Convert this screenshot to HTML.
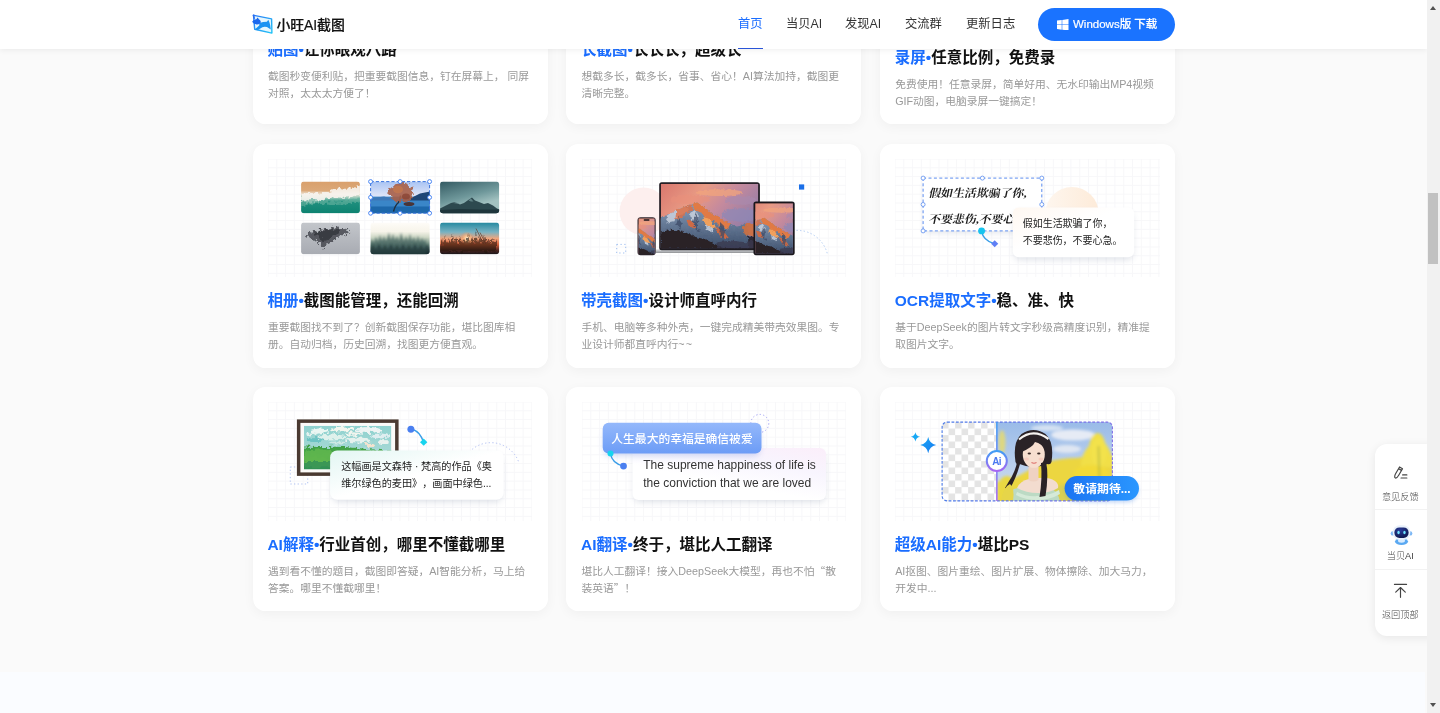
<!DOCTYPE html>
<html lang="zh-CN">
<head>
<meta charset="utf-8">
<title>小旺AI截图</title>
<style>
*{box-sizing:border-box;margin:0;padding:0}
html,body{width:1440px;height:713px;overflow:hidden}
body{text-spacing-trim:space-all;font-family:"Liberation Sans","Noto Sans CJK SC",sans-serif;background:#fafafa;color:#1a1a1a;position:relative}
.page{will-change:transform;position:absolute;left:0;top:0;width:1427px;height:713px;overflow:hidden;background:#fafafa}
.next{position:absolute;left:0;top:672px;width:1425px;height:41px;background:#fafcff}
/* header */
.hdr{position:absolute;left:0;top:0;width:1427px;height:49px;background:#fff;box-shadow:0 1px 6px rgba(0,0,0,.07);z-index:10}
.logo{position:absolute;left:252px;top:14px;width:21px;height:20px}
.brand{position:absolute;left:276.5px;top:13.5px;height:23px;line-height:23px;font-size:13.9px;font-weight:500;color:#111;white-space:nowrap;letter-spacing:-.08px;-webkit-text-stroke:.2px #111}
.nav{position:absolute;top:0;height:49px;line-height:49px;font-size:12.3px;color:#333;white-space:nowrap}
.nav.on{color:#1a6dff}
.nav.on:after{content:"";position:absolute;left:0;right:0;top:47.700px;height:1.500px;background:#2a55d8}
.dl{position:absolute;left:1038px;top:8px;width:137px;height:33px;border-radius:17px;background:#1a73ff;color:#fff;font-size:11.5px;font-weight:500;line-height:33px;white-space:nowrap}
.dl svg{position:absolute;left:19px;top:10.800px;width:11.500px;height:11.500px}
.dl span{position:absolute;left:35px;top:0;-webkit-text-stroke:.2px #fff}
/* cards */
.card{position:absolute;width:295.2px;background:#fff;border-radius:12.3px;box-shadow:0 3px 12px rgba(0,0,0,.045);padding:15px 15.4px 0}
.ill{position:relative;width:264.4px;height:118.7px;overflow:hidden;
 background-color:#fff;
 background-image:linear-gradient(#f7f7f9 1px,transparent 1px),linear-gradient(90deg,#f7f7f9 1px,transparent 1px);
 background-size:8.8px 8.8px;background-position:-.5px -.5px}
.ill svg{position:absolute;left:0;top:0;width:264.4px;height:118.7px;overflow:visible}
.t{margin-top:13.2px;margin-left:-.5px;height:21.5px;line-height:21.5px;font-size:15.5px;font-weight:700;color:#111;white-space:nowrap}
.t b{color:#1a6dff;font-weight:700}
.d{margin-top:7.5px;font-size:10.76px;line-height:16.9px;color:#999;font-weight:400}
.q{font-family:"Noto Sans CJK SC",sans-serif}
.tx{position:absolute;white-space:nowrap}
/* side */
.side{position:absolute;left:1374.5px;top:444px;width:61px;height:191.5px;background:#fff;border-radius:12px 0 0 12px;box-shadow:0 2px 10px rgba(0,0,0,.08);z-index:5}
.side .lb{position:absolute;left:1px;width:49.5px;text-align:center;font-size:9.2px;color:#444;font-weight:300;line-height:12px;margin-top:1px}
.side i{position:absolute;left:0;width:53.5px;height:1px;background:#f2f2f2}
/* scrollbar */
.sb{position:absolute;left:1427px;top:0;width:13px;height:713px;background:#f1f1f1;z-index:20}
.sb .th{position:absolute;left:1.3px;top:192.700px;width:10px;height:71.300px;background:#c1c1c1}
.sb .up,.sb .dn{position:absolute;left:3px;width:0;height:0;border-left:3.5px solid transparent;border-right:3.5px solid transparent}
.sb .up{top:6px;border-bottom:4px solid #505050}
.sb .dn{bottom:6px;border-top:4px solid #505050}
</style>
</head>
<body>
<div class="page">
<div class="next"></div>

<!-- ROW 1 -->
<div class="card" style="left:252.5px;top:-108.1px;height:232.3px">
 <div class="ill"></div>
 <div class="t"><b>贴图•</b>让你眼观八路</div>
 <div class="d">截图秒变便利贴，把重要截图信息，钉在屏幕上， 同屏对照，太太太方便了！</div>
</div>
<div class="card" style="left:566.15px;top:-108.1px;height:232.3px">
 <div class="ill"></div>
 <div class="t"><b>长截图•</b>长长长，超级长</div>
 <div class="d">想截多长，截多长，省事、省心！AI算法加持，截图更清晰完整。</div>
</div>
<div class="card" style="left:879.8px;top:-108.1px;height:232.3px">
 <div class="ill" style="height:126.7px"></div>
 <div class="t"><b>录屏•</b>任意比例，免费录</div>
 <div class="d">免费使用！任意录屏，简单好用、无水印输出MP4视频GIF动图，电脑录屏一键搞定！</div>
</div>

<!-- ROW 2 -->
<div class="card" style="left:252.5px;top:143.6px;height:224.5px">
 <div class="ill" id="i21"><svg viewBox="0 0.5 264.4 118.7">
<defs>
 <clipPath id="p1"><rect x="33.1" y="23.1" width="58.8" height="31.6" rx="3"/></clipPath>
 <clipPath id="p2"><rect x="102.6" y="23.1" width="59" height="31.6" rx="1"/></clipPath>
 <clipPath id="p3"><rect x="172.1" y="23.1" width="59" height="31.6" rx="3"/></clipPath>
 <clipPath id="p4"><rect x="33.1" y="64.1" width="58.8" height="31.6" rx="3"/></clipPath>
 <clipPath id="p5"><rect x="102.6" y="64.1" width="59" height="31.6" rx="3"/></clipPath>
 <clipPath id="p6"><rect x="172.1" y="64.1" width="59" height="31.6" rx="3"/></clipPath>
 <linearGradient id="g1" x1="0" y1="0" x2="0" y2="1"><stop offset="0" stop-color="#d9a06c"/><stop offset=".28" stop-color="#dba878"/><stop offset=".4" stop-color="#efe6d8"/><stop offset=".52" stop-color="#8fc4b4"/><stop offset=".64" stop-color="#1f8f7e"/><stop offset="1" stop-color="#0c8270"/></linearGradient>
 <linearGradient id="g2" x1="0" y1="0" x2="0" y2="1"><stop offset="0" stop-color="#a9c4f3"/><stop offset=".45" stop-color="#dfe4f8"/><stop offset=".5" stop-color="#3d83c4"/><stop offset="1" stop-color="#1f6fb3"/></linearGradient>
 <linearGradient id="g3" x1="0" y1="0" x2=".5" y2="1"><stop offset="0" stop-color="#335a62"/><stop offset=".55" stop-color="#6f989b"/><stop offset=".85" stop-color="#a3c2c1"/></linearGradient>
 <linearGradient id="g4" x1="0" y1="0" x2="0" y2="1"><stop offset="0" stop-color="#c3c6cb"/><stop offset="1" stop-color="#a8abb2"/></linearGradient>
 <linearGradient id="g5" x1="0" y1="0" x2="0" y2="1"><stop offset="0" stop-color="#fefcf8"/><stop offset=".28" stop-color="#f7f4ea"/><stop offset=".46" stop-color="#cfd8c6"/><stop offset=".7" stop-color="#6c8a7f"/><stop offset=".92" stop-color="#2c4446"/><stop offset="1" stop-color="#14242a"/></linearGradient>
 <linearGradient id="g6" x1="0" y1="0" x2="0" y2="1"><stop offset="0" stop-color="#2489a0"/><stop offset=".3" stop-color="#78b2c2"/><stop offset=".5" stop-color="#f0a67e"/><stop offset=".68" stop-color="#d9623a"/><stop offset=".85" stop-color="#5a2a22"/><stop offset="1" stop-color="#15151a"/></linearGradient>
 <radialGradient id="sun"><stop offset="0" stop-color="#fff6e0"/><stop offset=".4" stop-color="#ffc38a" stop-opacity=".8"/><stop offset="1" stop-color="#f08a55" stop-opacity="0"/></radialGradient>
 <filter id="b1" x="-20%" y="-20%" width="140%" height="140%"><feGaussianBlur stdDeviation="1.2"/></filter>
 <filter id="dz" x="-20%" y="-20%" width="140%" height="140%"><feTurbulence type="fractalNoise" baseFrequency=".3" numOctaves="2" seed="7" result="n"/><feDisplacementMap in="SourceGraphic" in2="n" scale="6" xChannelSelector="R" yChannelSelector="G"/><feGaussianBlur stdDeviation=".4"/></filter>
 <filter id="dz2" x="-20%" y="-20%" width="140%" height="140%"><feTurbulence type="fractalNoise" baseFrequency=".35" numOctaves="2" seed="3" result="n"/><feDisplacementMap in="SourceGraphic" in2="n" scale="8" xChannelSelector="R" yChannelSelector="G"/><feGaussianBlur stdDeviation=".6"/></filter>
 <filter id="b05" x="-20%" y="-20%" width="140%" height="140%"><feGaussianBlur stdDeviation=".5"/></filter>
</defs>
<!-- photo 1 beach -->
<g clip-path="url(#p1)">
 <rect x="33" y="23" width="59" height="32" fill="url(#g1)"/>
 <path d="M33 36 q8 -3 15 -1 t14 -2 t13 -3 t17 -3 v9 q-10 4 -20 3 t-20 3 t-19 1z" fill="#f7f4ee" opacity=".92" filter="url(#dz)"/>
 <path d="M33 42 q12 -3 24 0 t35 -3 v4 q-20 5 -34 3 t-25 2z" fill="#5fae9c" opacity=".7" filter="url(#dz)"/>
</g>
<!-- photo 2 tree -->
<g clip-path="url(#p2)">
 <rect x="102" y="23" width="60" height="32" fill="url(#g2)"/>
 <path d="M102 40 l14 -2 l12 3 h10 l14 -4 l10 -3 v12 h-60z" fill="#3f78b8"/>
 <path d="M140 41 l12 -6 l10 -2 v10 h-22z" fill="#1f4677"/>
 <rect x="102" y="42" width="60" height="13" fill="#3a86c8"/>
 <rect x="102" y="48" width="60" height="7" fill="#1d68ab"/>
 <path d="M125.500 53 q1.500 -6 5 -9 q1.500 -3 2 -7" stroke="#22303f" stroke-width="1.400" fill="none"/>
 <path d="M120.500 36 q-1 -6 5 -8 q2 -4 8 -4 q5 -.5 7 3 q5 2 4 8 q2 5 -3 7 q-4 3 -8 .5 q-4 2 -7 -1 q-5 -1 -6 -5.500z" fill="#a8614a" opacity=".9" filter="url(#dz)"/>
 <ellipse cx="130" cy="31" rx="5" ry="3.800" fill="#c27750" opacity=".9" filter="url(#b05)"/>
 <ellipse cx="138" cy="38" rx="4" ry="3" fill="#8a4536" opacity=".8" filter="url(#b05)"/>
 <ellipse cx="141" cy="45.500" rx="5.500" ry="2" fill="#4a3438" filter="url(#b05)"/>
</g>
<!-- photo 3 teal mountain -->
<g clip-path="url(#p3)">
 <rect x="172" y="23" width="60" height="32" fill="url(#g3)"/>
 <path d="M172 50 l6 -3 l5 -2.500 l4 -1 l5 2.500 l4 -1.500 l5 -3.500 l3 -2 l3 3 l4 1.500 l5 2 l4 -1 l5 2.500 l4 3 l4 1.500 v6 h-70z" fill="#2d494f"/>
 <path d="M172 51.500 l20 -1 l20 .5 l20 0 v5 h-60z" fill="#1f363c"/>
 <path d="M200.500 42 l2.500 -2 l2.500 3 l-2.500 0 z M185 44.500 l3 -1 l3 2z" fill="#7fa3a6" opacity=".6"/>
</g>
<!-- photo 4 ink grey -->
<g clip-path="url(#p4)">
 <rect x="33" y="64" width="59" height="32" fill="url(#g4)"/>
 <path d="M38 77 l7 -5 l5 1.500 l6 -4.500 l5 2 l7 -3.500 l6 2.500 l9 2 l-5 4 l-6 1 l-6 5 l-6 2 l-5 6.500 l-3.500 -6 l-6 -4 l-4.500 -1z" fill="#3f434a" opacity=".8" filter="url(#dz2)"/>
 <path d="M46 75 l9 -4 l7 1 l7 -2 l5 2 l-7 4 l-6 5 l-6 2 l-4 -5z" fill="#23272c" opacity=".55" filter="url(#dz2)"/>
</g>
<!-- photo 5 misty forest -->
<g clip-path="url(#p5)">
 <rect x="102" y="64" width="60" height="32" fill="url(#g5)"/>
 <path d="M102 86 l2 -5 l2 4 l2 -7 l2 6 l2 -8 l2 7 l2 -6 l2 6 l3 -9 l2 8 l2 -7 l2 7 l2 -5 l2 6 l2 -9 l3 9 l2 -6 l2 6 l2 -8 l2 8 l2 -5 l2 6 l2 -7 l2 7 l2 -5 l2 5 l2 -4 v16 h-60z" fill="#3f5f5b" opacity=".7" filter="url(#b1)"/>
 <path d="M102 91 l3 -5 l3 5 l3 -6 l3 6 l3 -5 l3 5 l3 -6 l3 6 l3 -5 l3 5 l3 -6 l3 6 l3 -5 l3 5 l3 -6 l3 6 l3 -5 l3 5 l3 -6 l3 6 v6 h-60z" fill="#182a2f" opacity=".55" filter="url(#b1)"/>
</g>
<!-- photo 6 sunset grass -->
<g clip-path="url(#p6)">
 <rect x="172" y="64" width="60" height="32" fill="url(#g6)"/>
 <circle cx="199" cy="80" r="7" fill="url(#sun)"/>
 <path d="M172 88 l2 -8 l1 7 l2 -10 l2 9 l2 -7 l1 7 l3 -11 l1 10 l2 -7 l2 8 l2 -9 l2 8 l2 -6 l2 6 l2 -10 l2 10 l2 -7 l2 7 l2 -12 l2 12 l2 -7 l2 7 l2 -8 l2 8 l2 -5 l2 5 l2 -6 l2 6 l2 -4 l1 4 v8 h-60z" fill="#24120f" opacity=".6" filter="url(#dz)"/>
 <path d="M208 70 l8 16 M212 74 l6 12" stroke="#5a2e1e" stroke-width=".6"/>
</g>
<!-- selection -->
<rect x="102.6" y="23.1" width="59" height="31.6" fill="none" stroke="#3a72dc" stroke-width="1" stroke-dasharray="3.2 2"/>
<g fill="#fff" stroke="#3b7cf0" stroke-width=".9">
 <circle cx="102.6" cy="23.1" r="2"/><circle cx="132.1" cy="23.1" r="2"/><circle cx="161.6" cy="23.1" r="2"/>
 <circle cx="102.6" cy="38.9" r="2"/><circle cx="161.6" cy="38.9" r="2"/>
 <circle cx="102.6" cy="54.7" r="2"/><circle cx="132.1" cy="54.7" r="2"/><circle cx="161.6" cy="54.7" r="2"/>
</g>
</svg></div>
 <div class="t"><b>相册•</b>截图能管理，还能回溯</div>
 <div class="d">重要截图找不到了？创新截图保存功能，堪比图库相册。自动归档，历史回溯，找图更方便直观。</div>
</div>
<div class="card" style="left:566.15px;top:143.6px;height:224.5px">
 <div class="ill" id="i22"><svg viewBox="0 0 264.4 118.7">
<defs>
 <linearGradient id="sk" x1="0" y1="0" x2="1" y2=".6"><stop offset="0" stop-color="#d9776e"/><stop offset=".35" stop-color="#e89a84"/><stop offset=".6" stop-color="#c58a9d"/><stop offset="1" stop-color="#8a7aa8"/></linearGradient>
 <linearGradient id="mt" x1="0" y1="0" x2="0" y2="1"><stop offset="0" stop-color="#8aa0bd"/><stop offset="1" stop-color="#3d4f6b"/></linearGradient>
 <symbol id="wall" viewBox="0 0 100 66" preserveAspectRatio="xMidYMid slice">
  <rect width="100" height="66" fill="url(#sk)"/>
  <g filter="url(#bl8)">
  <ellipse cx="60" cy="9" rx="24" ry="3.500" fill="#f2a47c" opacity=".75"/>
  <ellipse cx="30" cy="16" rx="20" ry="5" fill="#e98f7c" opacity=".6"/>
  <ellipse cx="82" cy="32" rx="20" ry="7" fill="#8f88b6" opacity=".75"/>
  <ellipse cx="82" cy="17" rx="16" ry="4.500" fill="#a98aae" opacity=".65"/>
  <rect x="-6" y="54" width="112" height="24" fill="#2e2a36"/>
  <path d="M0 35 l8 -4 l8 -4 l9 -4 l7 -2 l5.500 -2 l5 4 l5 3 l5 5 l6 2 l6 5 l7 3 l7 3 l6 -3 l5 2 v23 h-100z" fill="url(#mt)"/>
  <path d="M8 31 l8 -4 l9 -4 l4 3 l-5 5 l-6 2 l-4 5 l-8 2z M30 30 l5 -3 l4 6 l-2 7 l-6 -3z M46 40 l5 2 l3 8 l-7 -3z" fill="#c9d1de" opacity=".85"/>
  <path d="M32 21 l5.500 -2 l5 4 l5 3 l5 5 l6 2 l6 5 l7 3 l-3 5 l-9 -3 l-6 -6 l-7 0 l-4 -7 l-7 -3 l-3 -6z" fill="#e07a44"/>
  <path d="M16 27 l9 -4 l7 -2 l1 6 l-7 3 l-5 5 l-6 1z" fill="#dd7046" opacity=".85"/>
  <path d="M44 34 l7 3 l6 9 l-8 -2 l-7 -6z" fill="#f0a05c"/>
  <path d="M56 44 l8 4 l6 8 l-9 -2z M26 36 l6 2 l4 8 l-7 -2z" fill="#d9683c" opacity=".9"/>
  <path d="M36 30 l3 6 l-2 8 l4 6 l-5 -3 l-3 -8z M62 40 l4 8 l-2 8 l-4 -6z M18 34 l4 6 l-2 6 l-4 -4z" fill="#3c4966" opacity=".75"/>
  <path d="M84 44 l7 -4 l5 2 l4 1 v12 l-14 -3z" fill="#d0703f" opacity=".9"/>
  <path d="M0 50 l10 -3 l12 1 l12 6 l12 3 l12 6 l8 3 h-66z" fill="#2a2228"/>
  <path d="M58 60 l14 -2 l14 2 l14 -3 v9 h-42z" fill="#3a3a50" opacity=".8"/>
  </g>
 </symbol>
 <filter id="bl8" x="-5%" y="-5%" width="110%" height="110%"><feTurbulence type="fractalNoise" baseFrequency=".35" numOctaves="2" seed="11" result="n"/><feDisplacementMap in="SourceGraphic" in2="n" scale="4" xChannelSelector="R" yChannelSelector="G"/><feGaussianBlur stdDeviation=".35"/></filter>
</defs>
<circle cx="61.5" cy="52.4" r="24" fill="#fdefee"/>
<rect x="217" y="25.4" width="5.2" height="5.2" fill="#1a6fe8"/>
<path d="M214.5 71.4 a31 31 0 0 1 31 24" fill="none" stroke="#a9c6f0" stroke-width=".9" stroke-dasharray="1.4 2.2"/>
<rect x="34.7" y="85.4" width="9" height="8.6" fill="none" stroke="#9dbdf0" stroke-width="1" stroke-dasharray="1.2 2.6"/>
<!-- laptop -->
<rect x="73.5" y="90.6" width="108" height="3.4" rx="1.2" fill="#c9cbce"/>
<rect x="73.5" y="92.6" width="108" height="1.4" rx=".7" fill="#9a9c9f"/>
<rect x="77.2" y="23.2" width="100.7" height="68" rx="2.5" fill="#1d1a20"/>
<svg x="78.7" y="24.8" width="97.7" height="64.4"><use href="#wall" width="97.7" height="64.4"/></svg>
<!-- phone -->
<rect x="55.5" y="58.2" width="18.2" height="38" rx="3.2" fill="#2a2228"/>
<svg x="56.6" y="59.3" width="16" height="35.8"><use href="#wall" width="16" height="35.8"/></svg>
<rect x="61.6" y="60.2" width="6" height="1.6" rx=".8" fill="#1a1518"/>
<!-- tablet -->
<rect x="171.5" y="42.4" width="41.2" height="53.8" rx="2.6" fill="#1a171c"/>
<svg x="173.3" y="44.2" width="37.6" height="50.2"><use href="#wall" width="37.6" height="50.2"/></svg>
</svg></div>
 <div class="t"><b>带壳截图•</b>设计师直呼内行</div>
 <div class="d">手机、电脑等多种外壳，一键完成精美带壳效果图。专业设计师都直呼内行<span style="letter-spacing:1.200px">~~</span></div>
</div>
<div class="card" style="left:879.8px;top:143.6px;height:224.5px">
 <div class="ill" id="i23"><svg viewBox="0 0 264.4 118.7">
<defs>
 <filter id="sh3" x="-20%" y="-30%" width="140%" height="170%"><feGaussianBlur stdDeviation="3"/></filter>
 <linearGradient id="pk" x1="0" y1="0" x2="1" y2="0"><stop offset="0" stop-color="#fef6ee"/><stop offset="1" stop-color="#fdebd9"/></linearGradient>
 <linearGradient id="pp" x1="0" y1="0" x2="1" y2="1"><stop offset="0" stop-color="#fff8f1"/><stop offset=".45" stop-color="#ffffff"/></linearGradient>
</defs>
<circle cx="177" cy="54.600" r="26.700" fill="url(#pk)"/>
<rect x="30" y="24" width="115" height="50" fill="#5a6a8a" opacity=".16" filter="url(#sh3)"/>
<rect x="28.1" y="19.1" width="118.7" height="52.8" fill="#fff"/>
<g font-family="'Liberation Serif','Noto Serif CJK SC',serif" font-weight="700" fill="#1c1c1c" font-size="11.2" transform="skewX(-12)">
 <text x="41.5" y="37.8" textLength="98" lengthAdjust="spacingAndGlyphs">假如生活欺骗了你,</text>
 <text x="47" y="64.4" textLength="98" lengthAdjust="spacingAndGlyphs">不要悲伤,不要心急</text>
</g>
<rect x="28.1" y="19.1" width="118.7" height="52.8" fill="none" stroke="#5b8def" stroke-width="1" stroke-dasharray="3 2.4"/>
<g fill="#fff" stroke="#5b8def" stroke-width=".8">
 <circle cx="28.1" cy="19.1" r="2"/><circle cx="87.4" cy="19.1" r="2"/><circle cx="146.8" cy="19.1" r="2"/>
 <circle cx="28.1" cy="45.5" r="2"/><circle cx="146.8" cy="45.5" r="2"/>
 <circle cx="28.1" cy="71.9" r="2"/><circle cx="146.8" cy="71.9" r="2"/>
</g>
<path d="M86.6 71.9 c1 8 6 11 13 13" fill="none" stroke="#3a9ee8" stroke-width="1.3"/>
<circle cx="86.6" cy="71.9" r="3.4" fill="#17c4ee"/>
<rect x="97.2" y="82.3" width="5" height="5" fill="#5f7ff5" transform="rotate(45 99.7 84.8)"/>
<rect x="119" y="53" width="119" height="48" rx="6" fill="#5a6a8a" opacity=".18" filter="url(#sh3)"/>
<rect x="117.8" y="48.4" width="121.4" height="49.8" rx="6" fill="url(#pp)"/>
<g font-family="'Liberation Sans','Noto Sans CJK SC',sans-serif" font-size="10" fill="#222">
 <text x="127.7" y="68.2">假如生活欺骗了你，</text>
 <text x="127.7" y="84.9">不要悲伤，不要心急。</text>
</g>
</svg></div>
 <div class="t"><b>OCR提取文字•</b>稳、准、快</div>
 <div class="d">基于DeepSeek的图片转文字秒级高精度识别，精准提取图片文字。</div>
</div>

<!-- ROW 3 -->
<div class="card" style="left:252.5px;top:386.9px;height:224.5px">
 <div class="ill" id="i31"><svg viewBox="0 0 264.4 118.7">
<defs>
 <filter id="sh4" x="-20%" y="-30%" width="140%" height="170%"><feGaussianBlur stdDeviation="3"/></filter>
 <filter id="bp" x="-10%" y="-10%" width="120%" height="120%"><feTurbulence type="fractalNoise" baseFrequency=".22" numOctaves="2" seed="4" result="n"/><feDisplacementMap in="SourceGraphic" in2="n" scale="7" xChannelSelector="R" yChannelSelector="G"/><feGaussianBlur stdDeviation=".35"/></filter>
 <linearGradient id="psky" x1="0" y1="0" x2="0" y2="1"><stop offset="0" stop-color="#8fd2cf"/><stop offset="1" stop-color="#b5dcd9"/></linearGradient>
 <linearGradient id="pfld" x1="0" y1="0" x2="0" y2="1"><stop offset="0" stop-color="#3f9f45"/><stop offset=".5" stop-color="#55b04c"/><stop offset="1" stop-color="#2f9050"/></linearGradient>
 <linearGradient id="pop1" x1="0" y1="0" x2="1" y2="1"><stop offset="0" stop-color="#e2f6f3"/><stop offset=".5" stop-color="#ffffff"/></linearGradient>
 <clipPath id="pc"><rect x="36" y="23.8" width="87.4" height="43.4"/></clipPath>
</defs>
<path d="M204.2 47.3 A29.7 29.7 0 0 1 250.5 59.4" fill="none" stroke="#a9b9f0" stroke-width=".9" stroke-dasharray="1.3 2.3"/>
<rect x="22.3" y="65" width="17.4" height="17" fill="none" stroke="#a9bdf0" stroke-width=".9" stroke-dasharray="1.3 2.3"/>
<!-- frame -->
<rect x="28.9" y="17.4" width="101.7" height="56.5" fill="#4a3a31"/>
<rect x="32.4" y="20.9" width="94.7" height="49.5" fill="#fbfaf8"/>
<g clip-path="url(#pc)">
 <rect x="36" y="23.8" width="87.4" height="43.4" fill="url(#psky)"/>
 <g filter="url(#bp)">
  <ellipse cx="52" cy="29" rx="9" ry="2.5" fill="#eaf6f2"/>
  <ellipse cx="75" cy="27" rx="12" ry="2.6" fill="#f3f6ee"/>
  <ellipse cx="100" cy="28" rx="13" ry="3" fill="#eef4f3"/>
  <ellipse cx="112" cy="34" rx="9" ry="2.5" fill="#dfeef0"/>
  <ellipse cx="64" cy="35" rx="14" ry="2.6" fill="#dff1ec"/>
  <ellipse cx="90" cy="38" rx="13" ry="2.4" fill="#e6f2ee"/>
  <ellipse cx="48" cy="38" rx="8" ry="2" fill="#6cc3c3"/>
  <ellipse cx="102" cy="43" rx="5" ry="2.200" fill="#f5e3cf"/><ellipse cx="85" cy="32" rx="8" ry="1.800" fill="#f1f5ee"/><ellipse cx="44" cy="32" rx="6" ry="1.600" fill="#e3f2ee"/><ellipse cx="116" cy="40" rx="6" ry="2" fill="#e9f1ee"/><ellipse cx="70" cy="41" rx="9" ry="1.600" fill="#cfe9e4"/>
  <path d="M30 44 q14 1.500 28 1 t30 1 t40 3 v26 h-98z" fill="url(#pfld)"/>
  <path d="M36 50 q10 -4 22 -2 t18 5 v12 h-40z" fill="#62b84f" opacity=".8"/>
  <path d="M36 60 h88 v8 h-88z" fill="#2c8a58" opacity=".7"/>
 </g>
</g>
<!-- connector -->
<path d="M142.9 27.3 c7 1 10 6 12.9 12.9" fill="none" stroke="#3a9ee8" stroke-width="1.4"/>
<circle cx="142.9" cy="27.3" r="3.5" fill="#4a7ff0"/>
<rect x="153.1" y="37.6" width="5.2" height="5.2" fill="#17d4ee" transform="rotate(45 155.7 40.2)"/>
<!-- popup -->
<rect x="64" y="53" width="170" height="47" rx="7" fill="#5a6a8a" opacity=".2" filter="url(#sh4)"/>
<rect x="62.1" y="48.4" width="173.6" height="49.3" rx="7" fill="url(#pop1)"/>
<g font-family="'Liberation Sans','Noto Sans CJK SC',sans-serif" font-size="10.150" fill="#222" style="font-feature-settings:'chws' 0,'halt' 0,'palt' 0;text-spacing-trim:space-all;font-kerning:none">
 <text x="73.2" y="68.4">这幅画是文森特 · 梵高的作品《奥</text>
 <text x="73.2" y="85">维尔绿色的麦田》，画面中绿色...</text>
</g>
</svg></div>
 <div class="t"><b>AI解释•</b>行业首创，哪里不懂截哪里</div>
 <div class="d">遇到看不懂的题目，截图即答疑，AI智能分析，马上给答案。哪里不懂截哪里！</div>
</div>
<div class="card" style="left:566.15px;top:386.9px;height:224.5px">
 <div class="ill" id="i32"><svg viewBox="0 0 264.4 118.7">
<defs>
 <filter id="sh5" x="-20%" y="-30%" width="140%" height="170%"><feGaussianBlur stdDeviation="3"/></filter>
 <linearGradient id="bb" x1="0" y1="0" x2="0" y2="1"><stop offset="0" stop-color="#94b8fb"/><stop offset="1" stop-color="#6c9cf6"/></linearGradient>
 <linearGradient id="wb" x1="1" y1="0" x2=".3" y2="1"><stop offset="0" stop-color="#fbeefa"/><stop offset=".35" stop-color="#f8f5fe"/><stop offset=".7" stop-color="#ffffff"/></linearGradient>
</defs>
<circle cx="177.8" cy="21.4" r="9" fill="none" stroke="#9a9af0" stroke-width=".9" stroke-dasharray="1.3 2.2"/>
<!-- white box -->
<rect x="52" y="51" width="191" height="49" rx="6" fill="#5a6a8a" opacity=".2" filter="url(#sh5)"/>
<rect x="50.5" y="45.9" width="193.5" height="52.2" rx="6" fill="url(#wb)"/>
<g font-family="'Liberation Sans',sans-serif" font-size="12" fill="#333">
 <text x="61.300" y="66.700">The supreme happiness of life is</text>
 <text x="61.300" y="85">the conviction that we are loved</text>
</g>
<!-- connector -->
<path d="M28.5 51.4 c1 8 6 11 13 12.7" fill="none" stroke="#3a9ee8" stroke-width="1.4"/>
<circle cx="41.5" cy="64.1" r="3.4" fill="#4a7ff0"/>
<!-- blue bubble -->
<rect x="22" y="26" width="156" height="28" rx="6" fill="#4a6ad0" opacity=".25" filter="url(#sh5)"/>
<rect x="20.7" y="20.8" width="158.8" height="30.6" rx="6" fill="url(#bb)"/>
<circle cx="28.5" cy="51.4" r="3" fill="#17d4ee"/>
<text x="29.3" y="41.2" font-family="'Liberation Sans','Noto Sans CJK SC',sans-serif" font-size="11.8" font-weight="500" fill="#fff">人生最大的幸福是确信被爱</text>
</svg></div>
 <div class="t"><b>AI翻译•</b>终于，堪比人工翻译</div>
 <div class="d">堪比人工翻译！接入DeepSeek大模型，再也不怕<span class="q">“</span>散装英语<span class="q">”</span>！</div>
</div>
<div class="card" style="left:879.8px;top:386.9px;height:224.5px">
 <div class="ill" id="i33"><svg viewBox="0 0 264.4 118.7">
<defs>
 <pattern id="chk" x="47.1" y="20.1" width="13" height="13" patternUnits="userSpaceOnUse"><rect width="13" height="13" fill="#fff"/><rect width="6.5" height="6.5" fill="#e4e4e4"/><rect x="6.5" y="6.5" width="6.5" height="6.5" fill="#e4e4e4"/></pattern>
 <clipPath id="ic"><rect x="47.1" y="20.1" width="170.3" height="78.8" rx="5"/></clipPath>
 <clipPath id="pc2"><rect x="101.8" y="20.1" width="116" height="78.8"/></clipPath>
 <linearGradient id="sky3" x1="0" y1="0" x2="0" y2="1"><stop offset="0" stop-color="#9abbe8"/><stop offset=".6" stop-color="#bdd2ee"/><stop offset="1" stop-color="#d5dfe8"/></linearGradient>
 <linearGradient id="dv" x1="0" y1="0" x2="0" y2="1"><stop offset="0" stop-color="#3f9df5"/><stop offset="1" stop-color="#a866f2"/></linearGradient>
 <linearGradient id="bd" x1="0" y1="0" x2="1" y2="0"><stop offset="0" stop-color="#4a7ae8"/><stop offset="1" stop-color="#7f6ee8"/></linearGradient>
 <linearGradient id="pill" x1="0" y1="0" x2="1" y2="0"><stop offset="0" stop-color="#1c74f2"/><stop offset="1" stop-color="#2a97ff"/></linearGradient>
 <linearGradient id="spk" x1="0" y1="0" x2="1" y2="1"><stop offset="0" stop-color="#17a8f5"/><stop offset="1" stop-color="#1a78f0"/></linearGradient>
 <filter id="b7" x="-20%" y="-20%" width="140%" height="140%"><feGaussianBlur stdDeviation=".6"/></filter>
 <filter id="b15" x="-20%" y="-20%" width="140%" height="140%"><feGaussianBlur stdDeviation="1.6"/></filter>
 <filter id="sh6" x="-20%" y="-30%" width="140%" height="180%"><feGaussianBlur stdDeviation="2"/></filter>
</defs>
<!-- sparkles -->
<path d="M33.2 35 q1.2 6.6 8 8.1 q-6.8 1.5 -8 8.1 q-1.2 -6.6 -8 -8.1 q6.800 -1.500 8 -8.1z" fill="url(#spk)"/>
<path d="M20.4 30.200 q.7 3.800 4.600 4.600 q-3.900 .8 -4.600 4.600 q-.7 -3.800 -4.600 -4.600 q3.900 -.8 4.600 -4.600z" fill="#17a8f5"/>
<g clip-path="url(#ic)">
 <rect x="47.1" y="20.100" width="171" height="79" fill="url(#chk)"/>
 <g clip-path="url(#pc2)">
  <rect x="101.8" y="20.100" width="116" height="79" fill="url(#sky3)"/>
  <g filter="url(#b15)">
   <ellipse cx="178" cy="33" rx="22" ry="5.500" fill="#e6ebf5"/>
   <ellipse cx="152" cy="26" rx="16" ry="3" fill="#d5e2f3"/>
   <ellipse cx="172" cy="47" rx="14" ry="4" fill="#dfe6f2"/>
   <path d="M101.800 80 q8 -4 16 -3 q14 -8 30 -16 q18 -5 34 -5 q18 -4 36 -2 v52 h-116z" fill="#ecd640"/>
   <path d="M150 99 q6 -16 24 -18 q20 -2 44 6 v12z" fill="#d9cf52"/>
   <path d="M186 60 q2 -10 8 -16 q2 -12 8 -13 q6 0 8 10 q5 6 8 16 v8 h-32z" fill="#f1df46"/>
   <ellipse cx="204" cy="50" rx="8" ry="14" fill="#f3e24c"/>
   <ellipse cx="196" cy="72" rx="18" ry="9" fill="#f2da38"/>
   <ellipse cx="107" cy="40" rx="3.500" ry="12" fill="#e6db6e" opacity=".85"/>
   <ellipse cx="112" cy="86" rx="9" ry="12" fill="#e9d843"/>
   <path d="M203.500 44 l1 34" stroke="#93a040" stroke-width="1"/>
  </g>
  <!-- girl -->
  <g filter="url(#b7)">
   <path d="M110 99 q1 -9 9 -12 l10 -3 l16 -1 q10 1 16 7 q3 4 4 9z" fill="#bcdac4"/>
   <path d="M122 86 q3 -7 12 -9 l10 -1 q10 -1 16 3 q4 3 3 7 q-8 5 -20 5 q-12 0 -21 -5z" fill="#f3dccf"/>
   <path d="M122 90 q10 5 20 4 q12 0 22 -6 l1 4 q-10 6 -23 6 q-12 0 -21 -5z" fill="#d5ead8"/>
   <path d="M133.500 64 h10 v14 q-5 3 -10 0z" fill="#efd2c2"/>
   <path d="M120.500 60 q-3 -20 6 -28 q12 -8 24 0 q9 8 6 28 q-1 3 -4 2 q-14 6 -28 0 q-3 1 -4 -2z" fill="#2b2327"/>
   <ellipse cx="138.800" cy="52.500" rx="11" ry="13.300" fill="#f7decf"/>
   <path d="M126.500 50 q1 -14 12.500 -15.500 q11.500 0 12.500 14.500 q-5 -8 -11.500 -9 q-2 5 -13.500 10z" fill="#2b2327"/>
   <path d="M124 37.500 q14 -12 29.500 -.5" fill="none" stroke="#f6f3f0" stroke-width="2.200"/>
   <path d="M122.500 58 q-2 12 -9 22 l-3.500 6 l4.500 1.500 q7 -12 11 -27z" fill="#2b2327"/>
   <path d="M151 60 q3 12 -.5 34 l-6 1 q3 -18 1.500 -34z" fill="#2b2327"/>
   <ellipse cx="134.300" cy="51.500" rx="1.700" ry=".9" fill="#3a2a28"/><ellipse cx="143.800" cy="51.500" rx="1.700" ry=".9" fill="#3a2a28"/>
   <path d="M136.500 60.500 q2.500 1.500 5 0" stroke="#dc6e6a" stroke-width="1.100" fill="none"/>
   <ellipse cx="131.500" cy="57" rx="2.500" ry="1.500" fill="#f5c4b8" opacity=".7"/><ellipse cx="146" cy="57" rx="2.500" ry="1.500" fill="#f5c4b8" opacity=".7"/>
   <path d="M106 99 q2 -14 9 -17 q5 4 3 17z" fill="#e6d548"/>
  </g>
 </g>
</g>
<rect x="47.100" y="20.100" width="170.300" height="78.800" rx="5" fill="none" stroke="url(#bd)" stroke-width="1.100" stroke-dasharray="2.800 1.600"/>
<rect x="101.100" y="20.100" width="1.500" height="78.800" fill="url(#dv)"/>
<circle cx="101.800" cy="59" r="10" fill="#fff" stroke="url(#dv)" stroke-width="2"/>
<text x="101.600" y="62.800" text-anchor="middle" font-family="'Liberation Sans',sans-serif" font-weight="700" font-size="10" fill="#4a78f0" letter-spacing="-.6">Ai</text>
<!-- pill -->
<rect x="171" y="78" width="72" height="22" rx="11" fill="#1a6ae0" opacity=".3" filter="url(#sh6)"/>
<rect x="169.600" y="74.100" width="74.400" height="24.400" rx="12.200" fill="url(#pill)"/>
<text x="178.300" y="90.600" font-family="'Liberation Sans','Noto Sans CJK SC',sans-serif" font-weight="700" font-size="11.900" fill="#fff">敬请期待...</text>
</svg></div>
 <div class="t"><b>超级AI能力•</b>堪比PS</div>
 <div class="d">AI抠图、图片重绘、图片扩展、物体擦除、加大马力，开发中...</div>
</div>

<!-- HEADER -->
<div class="hdr">
 <svg class="logo" viewBox="0 0 21 20"><defs><linearGradient id="lg1" x1="0" y1="0" x2="1" y2="1"><stop offset="0" stop-color="#2a78f5"/><stop offset="1" stop-color="#22c4f6"/></linearGradient></defs>
<path d="M1.500 1.300 19.600 4.900 19.900 19.100 2.700 15.300z" fill="#e4f6fe" stroke="url(#lg1)" stroke-width="1.400" stroke-linejoin="round"/>
<path d="M7.500 9 q3.500 -1.200 7.400 -1.300 l1.400 -2 1 2.400 q1.300 3.200 1.500 7.400 l-3.800 -2.400 q-2.600 -.8 -4.600 .2 l-5 3 -2.600 -.9 4.400 -4z" fill="#1a93f2"/>
<path d="M.1 7.800 q1.500 -2.500 4.200 -2.600 l1.300 -1.700 1.300 1.800 q1.900 1 2 3 q-1.200 2.400 -4.200 2.200 q-2.900 -.3 -4.600 -2.700z" fill="#1a68ee"/>
<path d="M1.200 .7 2.500 4.800" stroke="#2a6cf0" stroke-width="1.300"/></svg>
 <div class="brand">小旺AI截图</div>
 <div class="nav on" style="left:738px">首页</div>
 <div class="nav" style="left:786px">当贝AI</div>
 <div class="nav" style="left:845px">发现AI</div>
 <div class="nav" style="left:905px">交流群</div>
 <div class="nav" style="left:966px">更新日志</div>
 <div class="dl"><svg viewBox="0 0 10 10"><path fill="#fff" d="M0 1.4 4.1.85V4.8H0zM4.6.78 10 0v4.8H4.6zM0 5.3h4.1v3.95L0 8.7zM4.6 5.3H10V10l-5.4-.75z"/></svg><span>Windows版 下载</span></div>
</div>

<!-- SIDE -->
<div class="side">
<svg style="position:absolute;left:17.500px;top:19.500px;width:17px;height:17px" viewBox="0 0 16 16" fill="none" stroke="#444" stroke-width="1.100" stroke-linecap="round" stroke-linejoin="round"><path d="M3.200 13.200 c-1.200 -.4 -.6 -2.600 .3 -4.200 l3.600 -6.200 2.800 1.600 -3.600 6.200 c-.9 1.500 -2 2.900 -3.100 2.600z M6.200 4.400 9 6 M10 10.300 h4 M8.500 13.200 h5.500"/></svg>
<svg style="position:absolute;left:15px;top:79px;width:23px;height:23px" viewBox="0 0 21 21"><defs><radialGradient id="rb" cx=".4" cy=".3" r=".8"><stop offset="0" stop-color="#2a3c9a"/><stop offset="1" stop-color="#0d1546"/></radialGradient></defs>
<ellipse cx="10.500" cy="17" rx="6" ry="3.200" fill="#5aa9f2"/><ellipse cx="10.500" cy="16.200" rx="3.200" ry="1.800" fill="#d9ecff"/>
<circle cx="2.600" cy="9.500" r="2" fill="#7db8f5"/><circle cx="18.400" cy="9.500" r="2" fill="#7db8f5"/>
<rect x="2.500" y="2" width="16" height="13.500" rx="6.500" fill="#e8f1fc"/>
<rect x="4" y="4" width="13" height="9.600" rx="4.600" fill="url(#rb)"/>
<ellipse cx="7.800" cy="8.600" rx="1.100" ry="1.600" fill="#6fe4ff"/><ellipse cx="13.200" cy="8.600" rx="1.100" ry="1.600" fill="#6fe4ff"/></svg>
<svg style="position:absolute;left:17.500px;top:137.500px;width:17px;height:17px" viewBox="0 0 16 16" fill="none" stroke="#444" stroke-width="1.100" stroke-linecap="round" stroke-linejoin="round"><path d="M2.300 2.300 h11.400 M8 14.400 V5.300 M3.500 9.600 8 5.200 12.500 9.600"/></svg>
 <div class="lb" style="top:46px">意见反馈</div>
 <i style="top:65px"></i>
 <div class="lb" style="top:105px">当贝AI</div>
 <i style="top:125px"></i>
 <div class="lb" style="top:164px">返回顶部</div>
</div>
</div>
<div class="sb"><div class="up"></div><div class="th"></div><div class="dn"></div></div>
</body>
</html>
